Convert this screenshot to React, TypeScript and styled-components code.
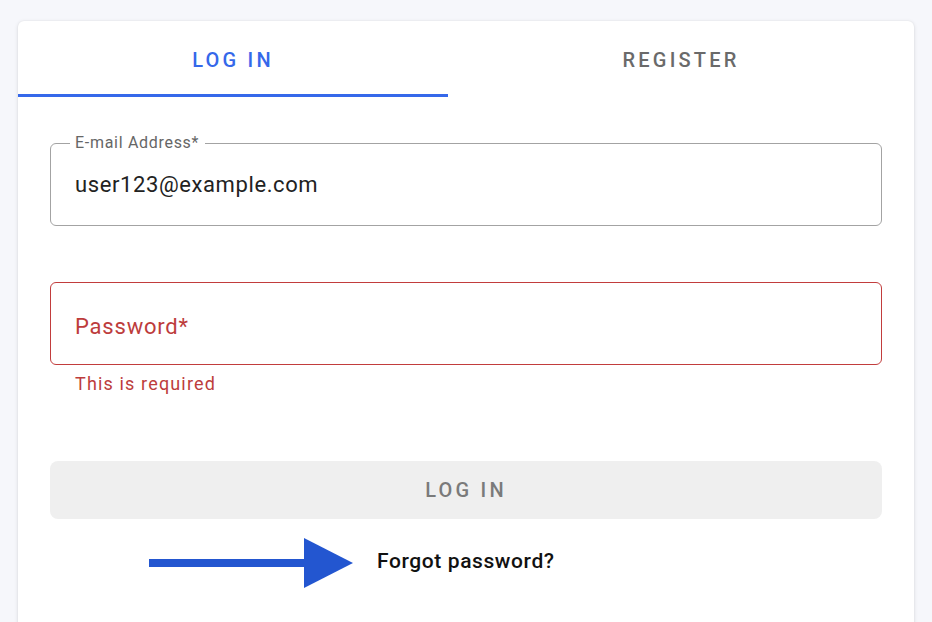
import styled, { createGlobalStyle } from 'styled-components';

const GlobalStyle = createGlobalStyle`
  html, body {
    margin: 0;
    padding: 0;
    background-color: #f6f7fb;
    font-family: Roboto, "Liberation Sans", Arial, sans-serif;
  }
`;

const PageWrapper = styled.div`
  height: 622px;
  overflow: hidden;
  padding: 21px 18px 0;
  box-sizing: border-box;
`;

const Card = styled.div`
  background-color: #fff;
  border-radius: 6px;
  min-height: 700px;
  box-shadow: 0 1px 4px rgba(0, 0, 0, 0.12), 0 0 2px rgba(0, 0, 0, 0.06);
`;

const TabBar = styled.div`
  display: flex;
  height: 76px;
`;

const Tab = styled.button<{ $active?: boolean; $width?: number }>`
  ${({ $width }) => ($width ? `width: ${$width}px;` : 'flex: 1;')}
  display: flex;
  align-items: center;
  justify-content: center;
  padding: 4px 0 0;
  border: none;
  border-bottom: 3px solid ${({ $active }) => ($active ? '#3568ea' : 'transparent')};
  background: none;
  font-family: Roboto, "Liberation Sans", sans-serif;
  font-size: 20px;
  font-weight: 500;
  letter-spacing: 3.2px;
  color: ${({ $active }) => ($active ? '#3568ea' : '#6a6a6a')};
  cursor: pointer;
`;

const Form = styled.div`
  padding: 46px 32px 0;
  display: flex;
  flex-direction: column;
`;

const Field = styled.div<{ $error?: boolean }>`
  position: relative;
  display: flex;
  align-items: center;
  height: 83px;
  box-sizing: border-box;
  padding: ${({ $error }) => ($error ? '5px 24px 0' : '0 24px')};
  border: 1px solid ${({ $error }) => ($error ? '#c23d3d' : '#a3a3a3')};
  border-radius: 6px;
  margin-bottom: ${({ $error }) => ($error ? '0' : '56px')};
`;

const FloatingLabel = styled.span`
  position: absolute;
  top: -10px;
  left: 19px;
  padding: 0 6px 0 5px;
  background-color: #fff;
  font-size: 16px;
  line-height: 18px;
  letter-spacing: 0.7px;
  color: #666;
`;

const FieldValue = styled.span`
  font-size: 22px;
  letter-spacing: 0.6px;
  color: #222;
`;

const Placeholder = styled.span`
  font-size: 22px;
  letter-spacing: 0.8px;
  color: #bd3c3c;
`;

const HelperText = styled.div`
  margin: 9px 0 0 25px;
  font-size: 18px;
  line-height: 20px;
  letter-spacing: 1.15px;
  color: #bd3c3c;
`;

const SubmitButton = styled.button`
  margin-top: 67px;
  height: 58px;
  border: none;
  border-radius: 8px;
  background-color: #efefef;
  font-family: Roboto, "Liberation Sans", sans-serif;
  font-size: 20px;
  font-weight: 500;
  letter-spacing: 3.2px;
  color: #7a7a7a;
`;

const ForgotRow = styled.div`
  display: flex;
  align-items: center;
  gap: 24px;
  margin: 19px 0 0 99px;
  height: 50px;
`;

const ForgotLink = styled.a`
  font-size: 21px;
  font-weight: 500;
  letter-spacing: 0.6px;
  color: #111;
  text-decoration: none;
  margin-top: -4px;
`;

function Arrow() {
  return (
    <svg width="204" height="50" viewBox="0 0 204 50">
      <rect x="0" y="21" width="160" height="8" fill="#2356d0" />
      <polygon points="155,0 204,25 155,50" fill="#2356d0" />
    </svg>
  );
}

function App() {
  return (
    <PageWrapper>
      <GlobalStyle />
      <Card>
        <TabBar>
          <Tab $active $width={430}>LOG IN</Tab>
          <Tab>REGISTER</Tab>
        </TabBar>
        <Form>
          <Field>
            <FloatingLabel>E-mail Address*</FloatingLabel>
            <FieldValue>user123@example.com</FieldValue>
          </Field>
          <Field $error>
            <Placeholder>Password*</Placeholder>
          </Field>
          <HelperText>This is required</HelperText>
          <SubmitButton>LOG IN</SubmitButton>
          <ForgotRow>
            <Arrow />
            <ForgotLink href="#">Forgot password?</ForgotLink>
          </ForgotRow>
        </Form>
      </Card>
    </PageWrapper>
  );
}

export default App;
